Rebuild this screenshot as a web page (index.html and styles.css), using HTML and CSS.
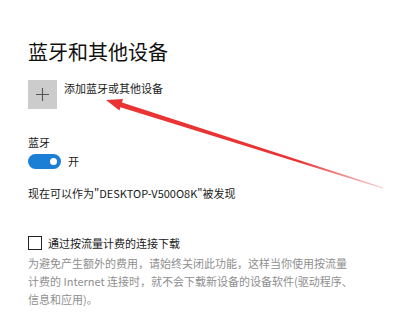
FILE: index.html
```html
<!DOCTYPE html>
<html lang="zh-CN">
<head>
    <meta charset="UTF-8">
    <meta name="viewport" content="width=device-width, initial-scale=1.0">
    <title>蓝牙和其他设备</title>
    <link rel="stylesheet" href="styles.css">
</head>
<body>
    <div class="page">
        <h1 class="title">蓝牙和其他设备</h1>

        <div class="add_row">
            <span class="add_btn">
                <svg width="15" height="15" viewBox="0 0 15 15">
                    <path d="M7.5 1 V14 M1 7.5 H14" stroke="#555" stroke-width="1.1" fill="none"/>
                </svg>
            </span>
            <span class="add_text">添加蓝牙或其他设备</span>
        </div>

        <div class="label">蓝牙</div>
        <div class="toggle_row">
            <span class="toggle"><span class="knob"></span></span>
            <span>开</span>
        </div>

        <div class="found">现在可以作为"DESKTOP-V500O8K"被发现</div>

        <div class="check_row">
            <span class="checkbox"></span>
            <span>通过按流量计费的连接下载</span>
        </div>
        <p class="note">为避免产生额外的费用，请始终关闭此功能，这样当你使用按流量计费的 Internet 连接时，就不会下载新设备的设备软件(驱动程序、信息和应用)。</p>
    </div>

    <svg class="arrow" width="416" height="329" viewBox="0 0 416 329">
        <defs>
            <linearGradient id="fade" gradientUnits="userSpaceOnUse" x1="106" y1="100" x2="383" y2="188">
                <stop offset="0" stop-color="#ea3434"/>
                <stop offset="0.7" stop-color="#ea3434"/>
                <stop offset="1" stop-color="#ea3434" stop-opacity="0.25"/>
            </linearGradient>
        </defs>
        <polygon points="106,100 123,99 122,102.4 383.2,187.5 382.8,188.5 120.4,107.2 119.4,110.5" fill="url(#fade)"/>
    </svg>
</body>
</html>
```

FILE: styles.css
```css
*{
    margin: 0;
    padding: 0;
    box-sizing: border-box;
}

body{
    background-color: #fff;
    font-family: "Noto Sans CJK SC", "Noto Sans", sans-serif;
    color: #1a1a1a;
    font-size: 11px;
}

.page{
    padding: 38px 28px 0 28px;
    display: flex;
    flex-direction: column;
}

.title{
    font-size: 20px;
    font-weight: normal;
    line-height: 28px;
    color: #111;
}

.add_row{
    display: flex;
    align-items: flex-start;
    gap: 7px;
    margin-top: 14px;
}

.add_btn{
    width: 29px;
    height: 29px;
    background-color: #cccccc;
    display: flex;
    align-items: center;
    justify-content: center;
}

.add_text{
    line-height: 16px;
}

.label{
    margin-top: 25px;
    line-height: 16px;
}

.toggle_row{
    display: flex;
    align-items: center;
    gap: 7px;
    margin-top: 3px;
    height: 16px;
}

.toggle{
    width: 33px;
    height: 15px;
    border-radius: 8px;
    background-color: #1b7fd6;
    display: flex;
    align-items: center;
    justify-content: flex-end;
    padding-right: 4px;
}

.knob{
    width: 7px;
    height: 7px;
    border-radius: 50%;
    background-color: #fff;
}

.found{
    margin-top: 16px;
    line-height: 16px;
}

.check_row{
    display: flex;
    align-items: center;
    gap: 6px;
    margin-top: 34px;
}

.checkbox{
    width: 14px;
    height: 14px;
    border: 1.5px solid #222;
}

.note{
    width: 325px;
    margin-top: 3px;
    color: #8f8f8f;
    line-height: 18px;
}

.arrow{
    position: absolute;
    left: 0;
    top: 0;
}
```
